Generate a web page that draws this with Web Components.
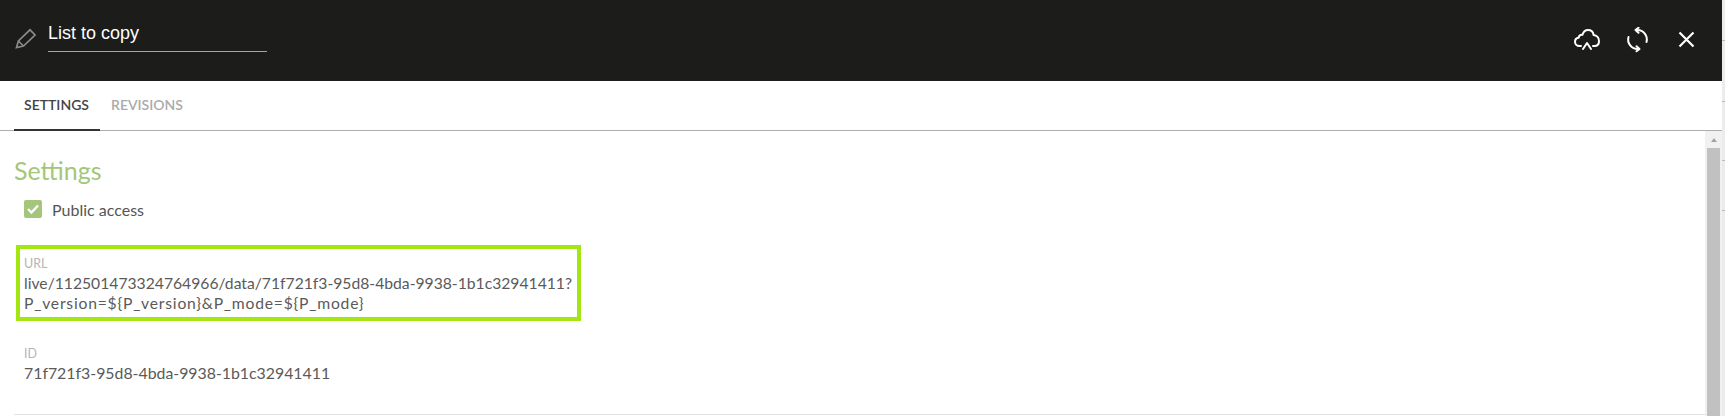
<!DOCTYPE html>
<html><head><meta charset="utf-8">
<style>
html,body{margin:0;padding:0;height:416px;overflow:hidden;background:#fff;font-family:"Lato","Open Sans",sans-serif}
</style></head><body>
<app-dialog>
  <top-bar slot="top" title-text="List to copy"></top-bar>
  <tab-strip slot="tabs"></tab-strip>
  <settings-panel slot="body"></settings-panel>
</app-dialog>
<script>
function def(name,html){customElements.define(name,class extends HTMLElement{
  constructor(){super();this.attachShadow({mode:'open'}).innerHTML=html;}
});}
def('app-dialog',`<style>
:host{display:flex;width:1725px;height:416px}
.main{width:1722px;display:flex;flex-direction:column;height:416px;flex:none}
.edge{flex:1;background:#ececec;display:flex;flex-direction:column}
.edge i{display:block;border-bottom:1px solid #bbb;box-sizing:border-box}
</style><div class="main"><slot name="top"></slot><slot name="tabs"></slot><slot name="body"></slot></div>
<div class="edge"><i style="height:41px"></i><i style="height:61px"></i><i style="height:59px"></i><i style="height:50px"></i></div>`);
customElements.define('top-bar',class extends HTMLElement{
  constructor(){super();this.attachShadow({mode:'open'}).innerHTML=`<style>
:host{display:flex;align-items:flex-start;height:81px;background:#1c1c1a;box-sizing:border-box;padding:21px 0 0 15px}
.pen{width:21px;height:21px;margin-top:7px;margin-right:12px;flex:none}
.name{width:219px;height:31px;box-sizing:border-box;border-bottom:1px solid #a5a5a3;color:#fff;font:18px/24px "Liberation Sans",Arial,sans-serif}
.acts{margin-left:auto;display:flex;padding-right:27px;margin-top:6px}
icon-sync{margin-left:25px}
icon-close{margin-left:28px}
svg{display:block}
</style>
<svg class="pen" viewBox="0 0 21 21" fill="none" stroke="#8a8a88" stroke-width="1.7"><path d="M1.500 19.500L3.400 13 15 1.800 20 7 8.500 18z"/><path d="M3.400 13l5.100 5"/></svg>
<div class="name"></div>
<div class="acts">
<icon-cloud></icon-cloud><icon-sync></icon-sync><icon-close></icon-close>
</div>`;
    this.shadowRoot.querySelector('.name').textContent=this.getAttribute('title-text');
  }
});
def('icon-cloud',`<style>:host{display:block;width:26px;height:26px}svg{display:block}</style><svg width="26" height="26" viewBox="0 0 26 26" fill="none" stroke="#fff" stroke-width="2" stroke-linecap="round" stroke-linejoin="round"><path d="M7 19H5.500C2.800 19 1 17 1 14.800 1 12.600 2.600 11 4.600 10.700 5 8.800 6.600 7.600 8.400 7.800 9.600 4.400 11.500 3 14 3c3 0 5.200 2 5.600 5 3.200.4 5.400 3 5.400 6 0 2.800-1.600 5-4.500 5H19"/><path d="M9 22l4-6 4 6"/></svg>`);
def('icon-sync',`<style>:host{display:block;width:24px;height:26px}svg{display:block}</style><svg width="24" height="26" viewBox="0 0 24 26" fill="none" stroke="#fff" stroke-width="2" stroke-linecap="round" stroke-linejoin="round"><path d="M12 3A9.500 9.500 0 0 1 21.500 15"/><path d="M13.500.7L10.500 3l3 2.800"/><path d="M13 22A9.500 9.500 0 0 1 3.500 10"/><path d="M11.500 19.200l3 2.800-3 2.300"/></svg>`);
def('icon-close',`<style>:host{display:block;width:18px;height:26px}svg{display:block;margin-top:3px}</style><svg width="18" height="18" viewBox="0 0 18 18" fill="none" stroke="#fff" stroke-width="2.200"><path d="M2.500 2.500l14 14M16.500 2.500l-14 14"/></svg>`);
def('tab-strip',`<style>
:host{display:flex;align-items:flex-start;height:50px;box-sizing:border-box;border-bottom:1px solid #adadad;padding-left:14px;font:600 14px/14px "Lato",sans-serif}
a{display:block;padding:17px 11px 0;box-sizing:border-box;color:#aaa}
a.on{color:#444;border-bottom:2px solid #333;height:50px;width:86px;padding:17px 0 0 10px}
</style><a class="on">SETTINGS</a><a>REVISIONS</a>`);
def('settings-panel',`<style>
:host{display:flex;flex:1;min-height:0;font-family:"Lato",sans-serif}
.content{flex:1;padding:0 0 0 14px;box-sizing:border-box;min-width:0}
h2{margin:25px 0 0;font:400 25px/28px "Lato",sans-serif;color:#a5c67a}
.chk{display:flex;align-items:center;gap:10px;margin:15px 0 0 10px;font-size:16px;color:#555;height:20px}
.box{width:18px;height:18px;border-radius:2px;background:#a5c67a;display:block;flex:none}
.bar{width:17px;flex:none;background:#f1f1f1;display:flex;flex-direction:column;align-items:center}
.bar .arrow{width:0;height:0;border:3.500px solid transparent;border-top:0;border-bottom:4px solid #a3a3a3;margin:7px 0 6px}
.bar .thumb{flex:1;width:13px;background:#c1c1c1}
.rule{height:1px;background:#e2e2e2}
.s{letter-spacing:.78px}
</style>
<div class="content">
<h2>Settings</h2>
<div class="chk"><svg class="box" viewBox="0 0 18 18"><path d="M4 9l3.500 3.500L14 5.500" fill="none" stroke="#fff" stroke-width="2.400"/></svg>Public access</div>
<field-block label="URL" hl size="15.7"><span>live/112501473324764966/data/71f721f3-95d8-4bda-9938-1b1c32941411?<br><span class="s">P_version=\${P_version}&amp;P_mode=\${P_mode}</span></span></field-block>
<field-block label="ID" size="15.85"><span>71f721f3-95d8-4bda-9938-1b1c32941411</span></field-block>
<div class="rule"></div>
</div>
<div class="bar"><div class="arrow"></div><div class="thumb"></div></div>`);
customElements.define('field-block',class extends HTMLElement{
  constructor(){super();const hl=this.hasAttribute('hl');this.attachShadow({mode:'open'}).innerHTML=`<style>
:host{display:block;width:565px;box-sizing:border-box;margin:${hl?'26px 0 0 2px':'25px 0 31px 2px'};padding:${hl?'7px 0 0 4px':'0 0 0 8px'};${hl?'height:76px;border:4px solid #a2e612;':''}}
.l{font-size:12.500px;line-height:16px;color:#b5b5b5}
.v{font-size:${this.getAttribute('size')}px;line-height:20px;color:#5a5a5a;margin-top:1px;white-space:nowrap}
</style><div class="l">${this.getAttribute('label')}</div><div class="v"><slot></slot></div>`;}
});
</script>
</body></html>
